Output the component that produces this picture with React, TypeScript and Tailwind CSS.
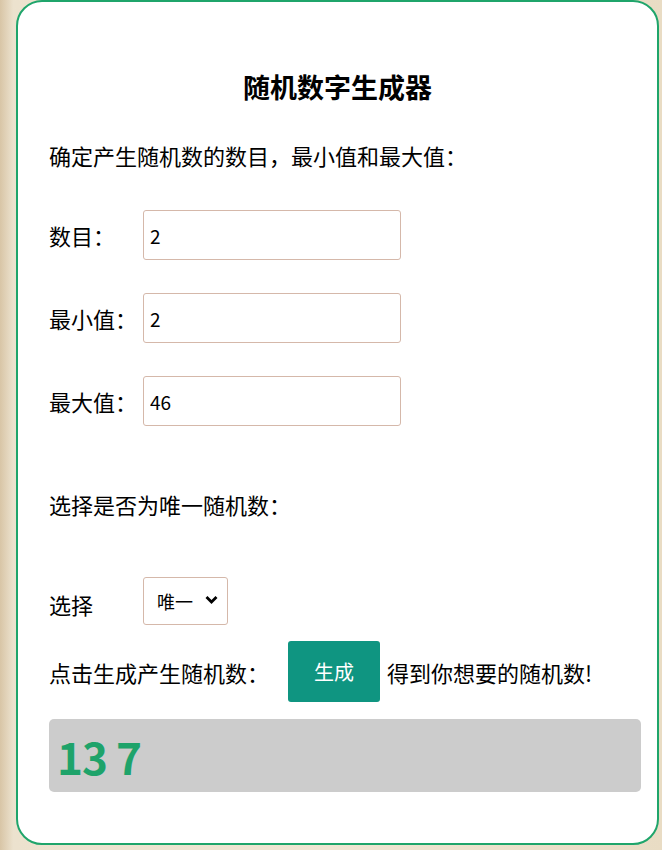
import { useState } from "react";

const fieldCls =
  "h-[50px] w-[258px] rounded-[3px] border border-[#d5b8aa] bg-white px-[6px] text-[19px] text-black outline-none";

const Field = ({ label, value }: { label: string; value: string }) => (
  <div className="flex items-center">
    <span className="w-[94px] shrink-0 text-[22px] leading-8">{label}</span>
    <input className={fieldCls} defaultValue={value} />
  </div>
);

export default function App() {
  const [unique, setUnique] = useState("唯一");

  return (
    <div
      className="min-h-[850px] w-[662px] bg-[linear-gradient(90deg,#d8c5a6_0%,#ece2ce_2%,#efe6d3_50%,#e9dcc4_100%)] pl-4 pr-[3px] text-black"
      style={{ fontFamily: '"Noto Sans CJK SC", "Noto Sans", sans-serif' }}
    >
      <div className="h-[845px] rounded-[26px] border-2 border-[#1fa56b] bg-white px-[31px] pt-[66px]">
        {/* Heading */}
        <h1 className="text-center text-[27px] font-bold leading-[38px]">随机数字生成器</h1>

        <p className="mt-[33px] text-[22px] leading-8">确定产生随机数的数目，最小值和最大值：</p>

        {/* Inputs */}
        <div className="mt-[39px] flex flex-col gap-[33px]">
          <Field label="数目：" value="2" />
          <Field label="最小值：" value="2" />
          <Field label="最大值：" value="46" />
        </div>

        <p className="mt-[62px] text-[22px] leading-8">选择是否为唯一随机数：</p>

        <div className="mt-[57px] flex items-center">
          <span className="w-[94px] shrink-0 pt-[6px] text-[22px] leading-8">选择</span>
          <div className="relative h-[48px] w-[85px]">
            <select
              value={unique}
              onChange={(e) => setUnique(e.target.value)}
              className="h-full w-full appearance-none rounded-[3px] border border-[#d5b8aa] bg-white pl-[13px] text-[18px] outline-none"
            >
              <option>唯一</option>
              <option>不唯一</option>
            </select>
            <svg
              className="pointer-events-none absolute right-[10px] top-[18px]"
              width="13"
              height="10"
              viewBox="0 0 13 10"
            >
              <path d="M1.5 2 6.5 7l5-5" fill="none" stroke="#000" strokeWidth="2.8" />
            </svg>
          </div>
        </div>

        {/* Action row */}
        <div className="mt-4 flex items-center">
          <span className="text-[22px] leading-8">点击生成产生随机数：</span>
          <button className="ml-[19px] h-[61px] w-[92px] rounded-[3px] bg-[#0f9581] text-[20px] text-white">
            生成
          </button>
          <span className="ml-[7px] text-[22px] leading-8">得到你想要的随机数!</span>
        </div>

        {/* Result */}
        <div className="mt-[17px] flex h-[73px] w-[592px] items-center rounded-[5px] bg-[#cccccc] pl-2">
          <span className="text-[44px] font-bold leading-none tracking-[-1px] text-[#1ea36a]">13 7</span>
        </div>
      </div>
    </div>
  );
}
